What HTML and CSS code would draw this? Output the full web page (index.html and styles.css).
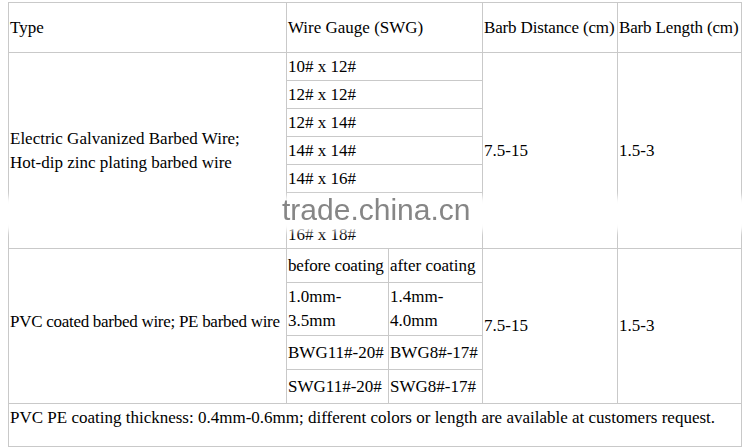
FILE: index.html
```html
<!DOCTYPE html>
<html>
<head>
<meta charset="utf-8">
<link rel="stylesheet" href="styles.css">
</head>
<body>
<div class="wrap">
<table class="spec">
  <colgroup>
    <col class="c1"><col class="c2a"><col class="c2b"><col class="c3"><col class="c4">
  </colgroup>
  <tr class="h50">
    <td>Type</td>
    <td colspan="2">Wire Gauge (SWG)</td>
    <td class="tight">Barb Distance (cm)</td>
    <td class="tight">Barb Length (cm)</td>
  </tr>
  <tr class="h28">
    <td rowspan="7">Electric Galvanized Barbed Wire;<br>Hot-dip zinc plating barbed wire</td>
    <td colspan="2">10# x 12#</td>
    <td rowspan="7">7.5-15</td>
    <td rowspan="7">1.5-3</td>
  </tr>
  <tr class="h28"><td colspan="2">12# x 12#</td></tr>
  <tr class="h28"><td colspan="2">12# x 14#</td></tr>
  <tr class="h28"><td colspan="2">14# x 14#</td></tr>
  <tr class="h28"><td colspan="2">14# x 16#</td></tr>
  <tr class="h28"><td colspan="2"></td></tr>
  <tr class="h28"><td colspan="2">16# x 18#</td></tr>
  <tr class="h34">
    <td rowspan="4" class="pvc">PVC coated barbed wire; PE barbed wire</td>
    <td class="tight">before coating</td>
    <td>after coating</td>
    <td rowspan="4">7.5-15</td>
    <td rowspan="4">1.5-3</td>
  </tr>
  <tr class="h53"><td>1.0mm-<br>3.5mm</td><td>1.4mm-<br>4.0mm</td></tr>
  <tr class="h34"><td>BWG11#-20#</td><td>BWG8#-17#</td></tr>
  <tr class="h34"><td>SWG11#-20#</td><td>SWG8#-17#</td></tr>
  <tr class="h43">
    <td colspan="5" class="note">PVC PE coating thickness: 0.4mm-0.6mm; different colors or length are available at customers request.</td>
  </tr>
</table>
<div class="band"></div>
<div class="mark">trade.china.cn</div>
</div>
</body>
</html>
```

FILE: styles.css
```css
html, body {
  margin: 0;
  padding: 0;
  background: #fff;
}
body {
  padding: 2px 0 0 8px;
  font-family: "Liberation Serif", "Times New Roman", serif;
  font-size: 17px;
  line-height: 24px;
  color: #000;
}
.wrap {
  position: relative;
  width: 742px;
}
.spec {
  border-collapse: collapse;
  table-layout: fixed;
  width: 734px;
}
.c1 { width: 278px; }
.c2a { width: 102px; }
.c2b { width: 94px; }
.c3 { width: 135px; }
.c4 { width: 124px; }
.spec td {
  border: 1px solid #c9c9c9;
  padding: 0 1px;
  vertical-align: middle;
  white-space: nowrap;
}
.h50 { height: 50px; }
.h28 { height: 28px; }
.h34 { height: 34px; }
.h53 { height: 53px; }
.h43 { height: 43px; }
.spec td.tight {
  letter-spacing: -0.15px;
}
.spec td.pvc {
  letter-spacing: -0.28px;
  padding-bottom: 8px;
}
.spec td.note {
  vertical-align: top;
  padding-top: 2px;
}
.band {
  position: absolute;
  left: -20px;
  right: -20px;
  top: 195px;
  height: 34px;
  background: #fff;
  filter: blur(3px);
}
.mark {
  position: absolute;
  left: 274px;
  top: 188px;
  font-family: "Liberation Sans", Arial, sans-serif;
  font-size: 30px;
  line-height: 40px;
  color: #868686;
  filter: blur(0.4px);
}
```
